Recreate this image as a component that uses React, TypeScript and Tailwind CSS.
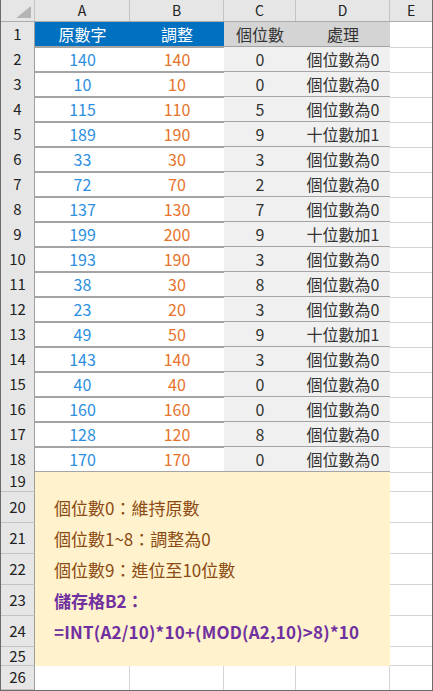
const rows = [
  [140, 140, 0],
  [10, 10, 0],
  [115, 110, 5],
  [189, 190, 9],
  [33, 30, 3],
  [72, 70, 2],
  [137, 130, 7],
  [199, 200, 9],
  [193, 190, 3],
  [38, 30, 8],
  [23, 20, 3],
  [49, 50, 9],
  [143, 140, 3],
  [40, 40, 0],
  [160, 160, 0],
  [128, 120, 8],
  [170, 170, 0],
];

const cols = "grid grid-cols-[34px_95px_94px_72px_94px_1fr]";
const rowHead =
  "flex items-center justify-center bg-[#e6e6e6] border-r border-r-[#9e9e9e] border-b border-b-[#c4c4c4] text-[15px] text-[#222]";

// rows 19..25 sit beside the merged note box
const lowerRows = [
  { n: 19, h: "h-[20px]" },
  { n: 20, h: "h-[31px]" },
  { n: 21, h: "h-[31px]" },
  { n: 22, h: "h-[31px]" },
  { n: 23, h: "h-[31px]" },
  { n: 24, h: "h-[31px]" },
  { n: 25, h: "h-[19px]" },
];

export default function App() {
  return (
    <div
      className="w-[433px] h-[691px] bg-white border-x border-b border-[#6b6b6b] overflow-hidden"
      style={{ fontFamily: '"Noto Sans CJK TC", "Noto Sans", sans-serif' }}
    >
      {/* column letters */}
      <div className={`${cols} h-[22px] bg-[#e6e6e6] border-b border-[#ababab] text-[14px] text-[#222]`}>
        <div className="relative border-r border-[#c4c4c4]">
          <svg className="absolute right-[3px] bottom-[3px]" width="15" height="12" viewBox="0 0 15 12">
            <polygon points="15,0 15,12 0,12" fill="#b5b5b5" />
          </svg>
        </div>
        {["A", "B", "C", "D", "E"].map((c) => (
          <div key={c} className="flex items-center justify-center border-r border-[#c4c4c4] last:border-r-0">
            {c}
          </div>
        ))}
      </div>

      {/* header row 1 */}
      <div className={`${cols} h-[25px] text-[16px]`}>
        <div className={rowHead}>1</div>
        <div className="flex items-center justify-center bg-[#0070c0] text-white border-b-2 border-[#a4a4a4]">原數字</div>
        <div className="flex items-center justify-center bg-[#0070c0] text-white border-b-2 border-[#a4a4a4]">調整</div>
        <div className="flex items-center justify-center bg-[#d4d4d4] text-[#333] border-b-2 border-[#a4a4a4]">個位數</div>
        <div className="flex items-center justify-center bg-[#d4d4d4] text-[#333] border-b-2 border-[#a4a4a4]">處理</div>
        <div className="border-b border-[#d4d4d4]" />
      </div>

      {rows.map(([a, b, c], i) => (
        <div key={i} className={`${cols} h-[25px] text-[16px]`}>
          <div className={rowHead}>{i + 2}</div>
          <div className="flex items-center justify-center text-[#2d8fe0] border-b-2 border-[#a4a4a4]">{a}</div>
          <div className="flex items-center justify-center text-[#e6732a] border-b-2 border-[#a4a4a4]">{b}</div>
          <div className="flex items-center justify-center bg-[#f0f0f0] text-[#333] border-b-2 border-[#a4a4a4]">{c}</div>
          <div className="flex items-center justify-center bg-[#f0f0f0] text-[#333] border-b-2 border-[#a4a4a4]">
            {c === 9 ? "十位數加1" : "個位數為0"}
          </div>
          <div className="border-b border-[#d4d4d4]" />
        </div>
      ))}

      {/* rows 19-25 with merged note */}
      <div className="flex">
        <div className="w-[34px] flex flex-col">
          {lowerRows.map((r) => (
            <div key={r.n} className={`${rowHead} ${r.h}`}>
              {r.n}
            </div>
          ))}
        </div>
        <div className="w-[355px] bg-[#fff2cc] pl-[19px] pt-[20px] text-[17px] leading-[31px]">
          <p className="text-[#8b4a12]">個位數0：維持原數</p>
          <p className="text-[#8b4a12]">個位數1~8：調整為0</p>
          <p className="text-[#8b4a12]">個位數9：進位至10位數</p>
          <p className="text-[#7030a0] font-bold">儲存格B2：</p>
          <p className="text-[#7030a0] font-bold tracking-[0.2px]">=INT(A2/10)*10+(MOD(A2,10)&gt;8)*10</p>
        </div>
        <div className="flex-1 flex flex-col">
          {lowerRows.map((r) => (
            <div key={r.n} className={`${r.h} border-b border-[#d4d4d4]`} />
          ))}
        </div>
      </div>

      {/* row 26 */}
      <div className={`${cols} h-[24px]`}>
        <div className={rowHead}>26</div>
        <div className="border-r border-[#d4d4d4]" />
        <div className="border-r border-[#d4d4d4]" />
        <div className="border-r border-[#d4d4d4]" />
        <div className="border-r border-[#d4d4d4]" />
        <div />
      </div>
    </div>
  );
}
